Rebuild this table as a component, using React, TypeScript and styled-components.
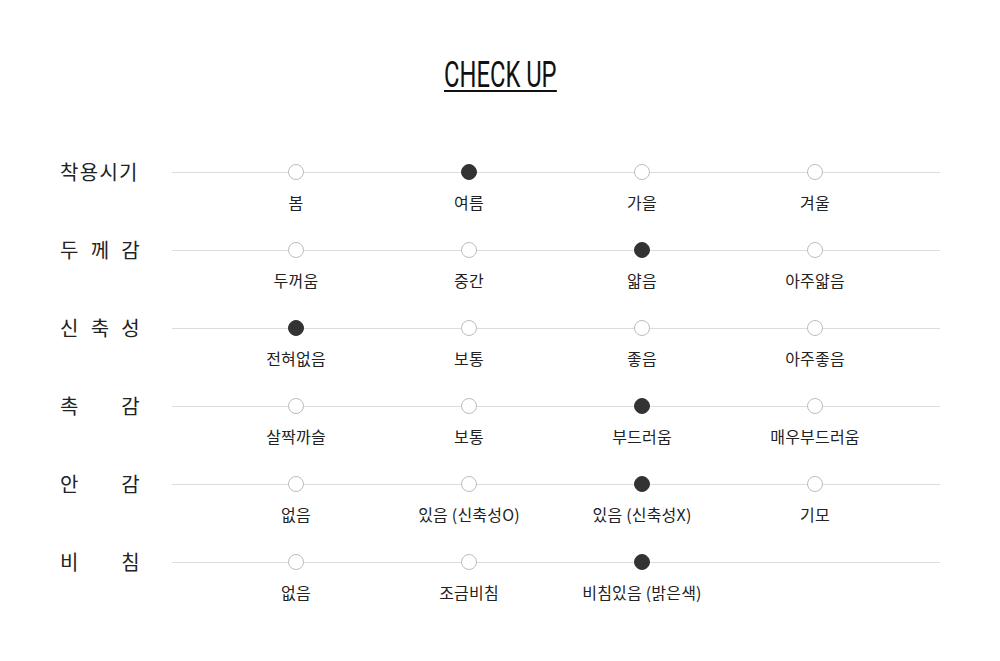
import styled, { createGlobalStyle } from 'styled-components';

type Item = { label: string; on?: boolean };
type Row = { title: string; items: Item[] };

const rows: Row[] = [
  {
    title: '착용시기',
    items: [{ label: '봄' }, { label: '여름', on: true }, { label: '가을' }, { label: '겨울' }],
  },
  {
    title: '두 께 감',
    items: [{ label: '두꺼움' }, { label: '중간' }, { label: '얇음', on: true }, { label: '아주얇음' }],
  },
  {
    title: '신 축 성',
    items: [{ label: '전혀없음', on: true }, { label: '보통' }, { label: '좋음' }, { label: '아주좋음' }],
  },
  {
    title: '촉 감',
    items: [{ label: '살짝까슬' }, { label: '보통' }, { label: '부드러움', on: true }, { label: '매우부드러움' }],
  },
  {
    title: '안 감',
    items: [{ label: '없음' }, { label: '있음 (신축성O)' }, { label: '있음 (신축성X)', on: true }, { label: '기모' }],
  },
  {
    title: '비 침',
    items: [{ label: '없음' }, { label: '조금비침' }, { label: '비침있음 (밝은색)', on: true }],
  },
];

function App() {
  return (
    <Page>
      <GlobalStyle />
      <Header>
        <Title>CHECK UP</Title>
      </Header>
      <List>
        {rows.map((row) => (
          <RowWrap key={row.title}>
            <RowTitle>{row.title}</RowTitle>
            <Track>
              {row.items.map((item) => (
                <Option key={item.label}>
                  <Dot $on={item.on} />
                  <OptionLabel>{item.label}</OptionLabel>
                </Option>
              ))}
            </Track>
          </RowWrap>
        ))}
      </List>
    </Page>
  );
}

const GlobalStyle = createGlobalStyle`
  body {
    margin: 0;
    background: #fff;
    font-family: 'Noto Sans CJK KR', 'Noto Sans', sans-serif;
    color: #222;
  }
`;

const Page = styled.div`
  width: 880px;
  margin: 0 auto;
  padding: 60px 0 40px;
  box-sizing: border-box;
`;

const Header = styled.div`
  display: flex;
  justify-content: center;
`;

const Title = styled.h1`
  margin: 0;
  font-family: Roboto, 'Liberation Sans', sans-serif;
  font-weight: 400;
  font-size: 36px;
  line-height: 30px;
  color: #111;
  transform: scaleX(0.66);
  border-bottom: 2px solid #111;
`;

const List = styled.div`
  display: flex;
  flex-direction: column;
  gap: 29px;
  margin-top: 72px;
`;

const RowWrap = styled.div`
  display: grid;
  grid-template-columns: 112px 1fr;
  align-items: start;
`;

const RowTitle = styled.div`
  width: 81px;
  font-size: 20px;
  line-height: 26px;
  margin-top: -5px;
  letter-spacing: 1.3px;
  text-align: justify;
  text-align-last: justify;
  color: #222;
`;

const Track = styled.div`
  position: relative;
  display: grid;
  grid-template-columns: repeat(4, 173px);
  padding: 0 37.5px;

  &::before {
    content: '';
    position: absolute;
    left: 0;
    right: 0;
    top: 8px;
    height: 1px;
    background: #dcdcdc;
  }
`;

const Option = styled.div`
  display: flex;
  flex-direction: column;
  align-items: center;
  gap: 11px;
`;

const Dot = styled.span<{ $on?: boolean }>`
  position: relative;
  box-sizing: border-box;
  width: 16px;
  height: 16px;
  border-radius: 50%;
  background: ${(p) => (p.$on ? '#333' : '#fff')};
  border: 1px solid ${(p) => (p.$on ? '#333' : '#bdbdbd')};
`;

const OptionLabel = styled.span`
  font-size: 16px;
  line-height: 22px;
  color: #222;
  white-space: nowrap;
  letter-spacing: 0.2px;
`;

export default App;
